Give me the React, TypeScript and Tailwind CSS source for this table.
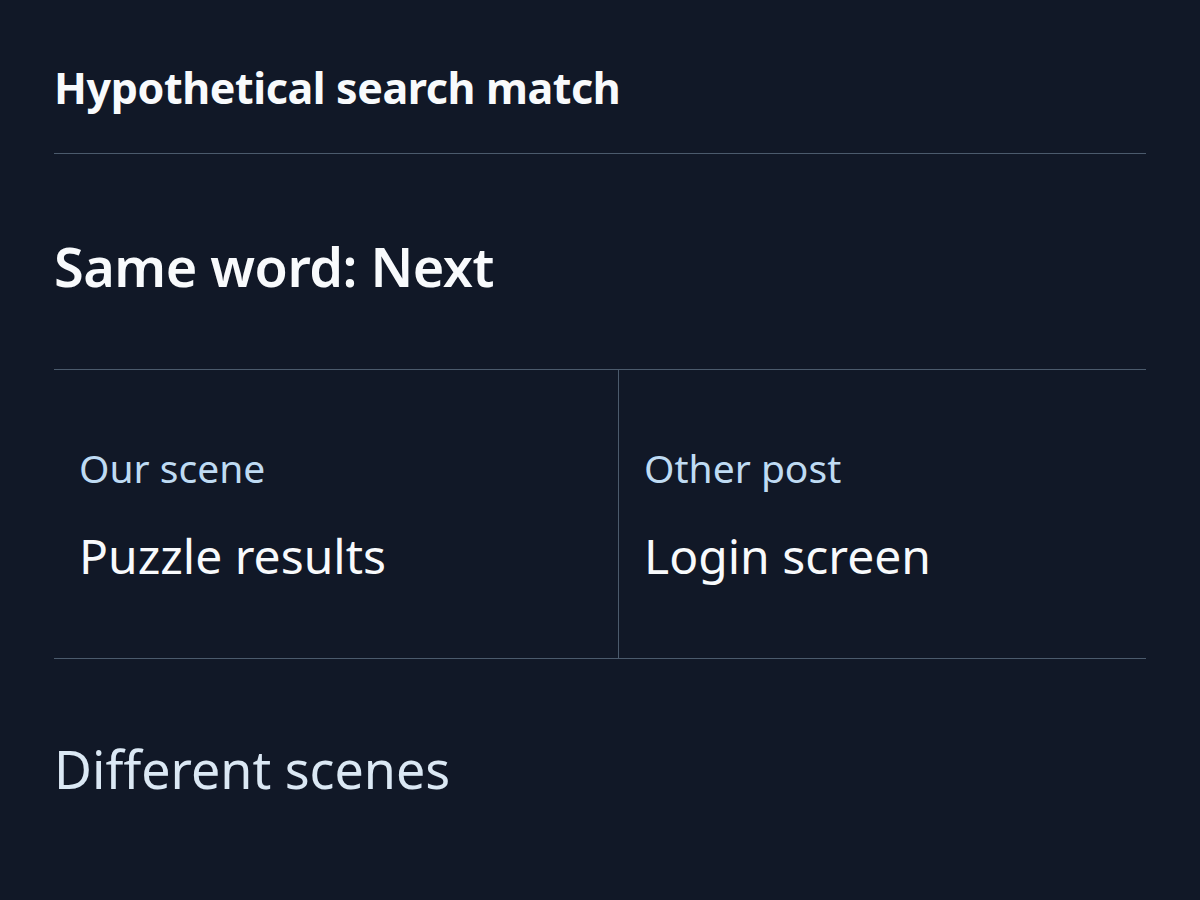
export default function App() {
  return (
    <div
      className="min-h-[900px] bg-[#111827] px-[54px]"
      style={{ fontFamily: '"Noto Sans", "Open Sans", sans-serif' }}
    >
      <div className="border-b border-[#4b5a6c] pt-[64px] pb-[41px]">
        <h1 className="text-[43px] leading-[48px] font-bold text-[#f8fafc] tracking-[-0.4px]">
          Hypothetical search match
        </h1>
      </div>

      <div className="border-b border-[#4b5a6c] pt-[76px] pb-[67px]">
        <h2 className="text-[54px] leading-[72px] font-semibold text-[#f8fafc] tracking-[-0.5px]">
          Same word: Next
        </h2>
      </div>

      <div className="grid grid-cols-[565px_1fr] border-b border-[#4b5a6c]">
        <div className="border-r border-[#4b5a6c] px-[25px] pt-[76px] pb-[70px]">
          <p className="text-[39px] leading-[44px] text-[#bfdbf3]">Our scene</p>
          <p className="mt-[34px] text-[48px] leading-[64px] text-[#f8fafc]">
            Puzzle results
          </p>
        </div>
        <div className="px-[25px] pt-[76px] pb-[70px]">
          <p className="text-[39px] leading-[44px] text-[#bfdbf3]">Other post</p>
          <p className="mt-[34px] text-[48px] leading-[64px] text-[#f8fafc]">
            Login screen
          </p>
        </div>
      </div>

      <div className="pt-[78px]">
        <p className="text-[52px] leading-[64px] text-[#dbe8f4]">Different scenes</p>
      </div>
    </div>
  );
}
